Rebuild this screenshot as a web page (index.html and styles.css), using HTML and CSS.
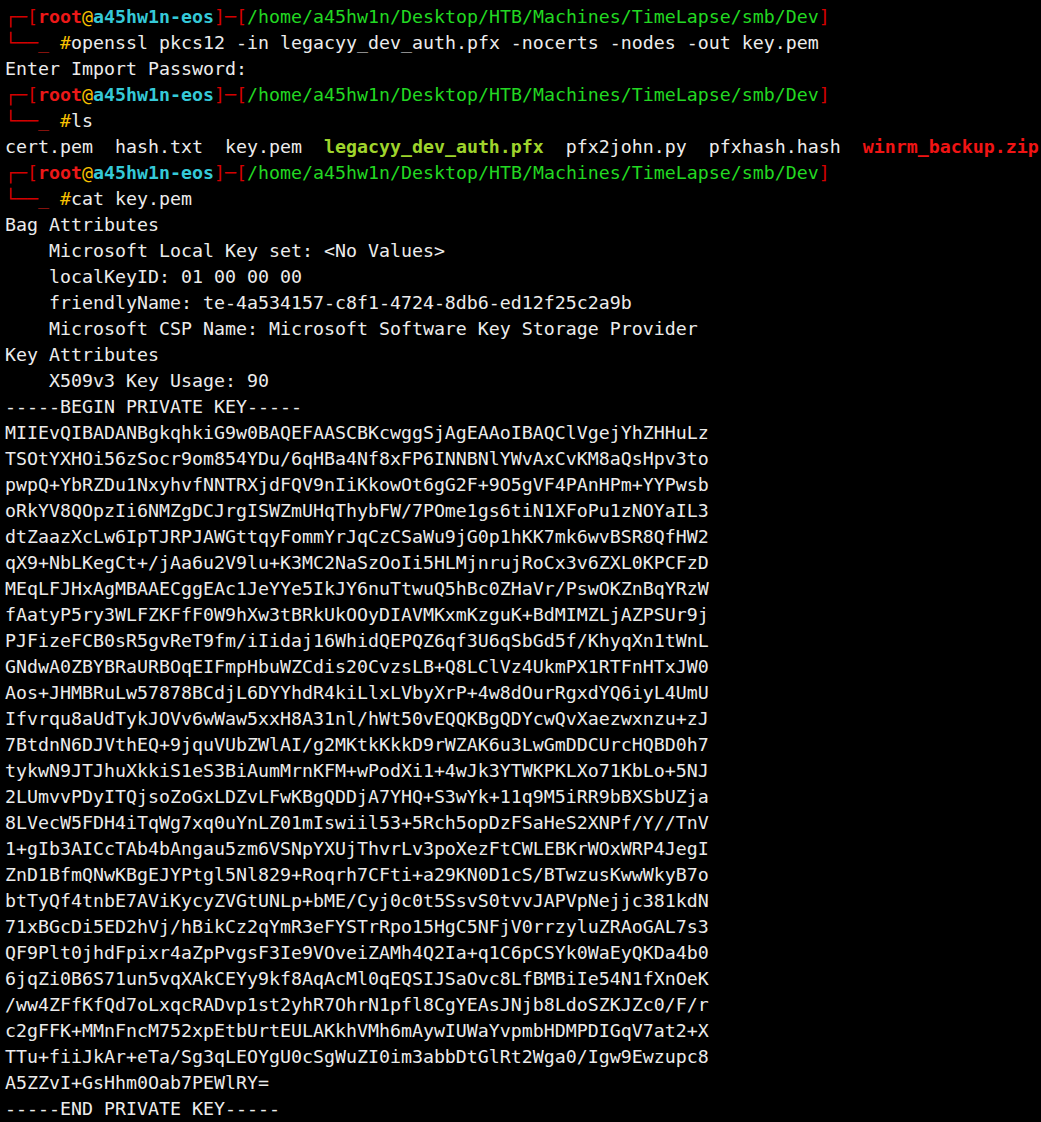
FILE: index.html
```html
<!DOCTYPE html>
<html lang="en">

<head>
    <meta charset="UTF-8" />
    <meta name="viewport" content="width=device-width, initial-scale=1.0" />
    <title>Terminal</title>
    <link rel="stylesheet" href="styles.css">
</head>

<body>
    <div class="term">
        <!-- openssl -->
        <div class="line"><span class="box">┌─[</span><span class="user">root</span><span class="at">@</span><span class="host">a45hw1n-eos</span><span class="box">]─[</span><span class="path">/home/a45hw1n/Desktop/HTB/Machines/TimeLapse/smb/Dev</span><span class="box">]</span></div>
        <div class="line"><span class="box">└──</span><span class="tip">_</span> <span class="hash">#</span>openssl pkcs12 -in legacyy_dev_auth.pfx -nocerts -nodes -out key.pem</div>
        <div class="line">Enter Import Password:</div>
        <!-- ls -->
        <div class="line"><span class="box">┌─[</span><span class="user">root</span><span class="at">@</span><span class="host">a45hw1n-eos</span><span class="box">]─[</span><span class="path">/home/a45hw1n/Desktop/HTB/Machines/TimeLapse/smb/Dev</span><span class="box">]</span></div>
        <div class="line"><span class="box">└──</span><span class="tip">_</span> <span class="hash">#</span>ls</div>
        <div class="line">cert.pem  hash.txt  key.pem  <span class="file-key">legacyy_dev_auth.pfx</span>  pfx2john.py  pfxhash.hash  <span class="file-zip">winrm_backup.zip</span></div>
        <!-- cat -->
        <div class="line"><span class="box">┌─[</span><span class="user">root</span><span class="at">@</span><span class="host">a45hw1n-eos</span><span class="box">]─[</span><span class="path">/home/a45hw1n/Desktop/HTB/Machines/TimeLapse/smb/Dev</span><span class="box">]</span></div>
        <div class="line"><span class="box">└──</span><span class="tip">_</span> <span class="hash">#</span>cat key.pem</div>
        <div class="line">Bag Attributes</div>
        <div class="line">    Microsoft Local Key set: &lt;No Values&gt;</div>
        <div class="line">    localKeyID: 01 00 00 00</div>
        <div class="line">    friendlyName: te-4a534157-c8f1-4724-8db6-ed12f25c2a9b</div>
        <div class="line">    Microsoft CSP Name: Microsoft Software Key Storage Provider</div>
        <div class="line">Key Attributes</div>
        <div class="line">    X509v3 Key Usage: 90</div>
        <div class="line">-----BEGIN PRIVATE KEY-----</div>
        <div class="line">MIIEvQIBADANBgkqhkiG9w0BAQEFAASCBKcwggSjAgEAAoIBAQClVgejYhZHHuLz</div>
        <div class="line">TSOtYXHOi56zSocr9om854YDu/6qHBa4Nf8xFP6INNBNlYWvAxCvKM8aQsHpv3to</div>
        <div class="line">pwpQ+YbRZDu1NxyhvfNNTRXjdFQV9nIiKkowOt6gG2F+9O5gVF4PAnHPm+YYPwsb</div>
        <div class="line">oRkYV8QOpzIi6NMZgDCJrgISWZmUHqThybFW/7POme1gs6tiN1XFoPu1zNOYaIL3</div>
        <div class="line">dtZaazXcLw6IpTJRPJAWGttqyFommYrJqCzCSaWu9jG0p1hKK7mk6wvBSR8QfHW2</div>
        <div class="line">qX9+NbLKegCt+/jAa6u2V9lu+K3MC2NaSzOoIi5HLMjnrujRoCx3v6ZXL0KPCFzD</div>
        <div class="line">MEqLFJHxAgMBAAECggEAc1JeYYe5IkJY6nuTtwuQ5hBc0ZHaVr/PswOKZnBqYRzW</div>
        <div class="line">fAatyP5ry3WLFZKFfF0W9hXw3tBRkUkOOyDIAVMKxmKzguK+BdMIMZLjAZPSUr9j</div>
        <div class="line">PJFizeFCB0sR5gvReT9fm/iIidaj16WhidQEPQZ6qf3U6qSbGd5f/KhyqXn1tWnL</div>
        <div class="line">GNdwA0ZBYBRaURBOqEIFmpHbuWZCdis20CvzsLB+Q8LClVz4UkmPX1RTFnHTxJW0</div>
        <div class="line">Aos+JHMBRuLw57878BCdjL6DYYhdR4kiLlxLVbyXrP+4w8dOurRgxdYQ6iyL4UmU</div>
        <div class="line">Ifvrqu8aUdTykJOVv6wWaw5xxH8A31nl/hWt50vEQQKBgQDYcwQvXaezwxnzu+zJ</div>
        <div class="line">7BtdnN6DJVthEQ+9jquVUbZWlAI/g2MKtkKkkD9rWZAK6u3LwGmDDCUrcHQBD0h7</div>
        <div class="line">tykwN9JTJhuXkkiS1eS3BiAumMrnKFM+wPodXi1+4wJk3YTWKPKLXo71KbLo+5NJ</div>
        <div class="line">2LUmvvPDyITQjsoZoGxLDZvLFwKBgQDDjA7YHQ+S3wYk+11q9M5iRR9bBXSbUZja</div>
        <div class="line">8LVecW5FDH4iTqWg7xq0uYnLZ01mIswiil53+5Rch5opDzFSaHeS2XNPf/Y//TnV</div>
        <div class="line">1+gIb3AICcTAb4bAngau5zm6VSNpYXUjThvrLv3poXezFtCWLEBKrWOxWRP4JegI</div>
        <div class="line">ZnD1BfmQNwKBgEJYPtgl5Nl829+Roqrh7CFti+a29KN0D1cS/BTwzusKwwWkyB7o</div>
        <div class="line">btTyQf4tnbE7AViKycyZVGtUNLp+bME/Cyj0c0t5SsvS0tvvJAPVpNejjc381kdN</div>
        <div class="line">71xBGcDi5ED2hVj/hBikCz2qYmR3eFYSTrRpo15HgC5NFjV0rrzyluZRAoGAL7s3</div>
        <div class="line">QF9Plt0jhdFpixr4aZpPvgsF3Ie9VOveiZAMh4Q2Ia+q1C6pCSYk0WaEyQKDa4b0</div>
        <div class="line">6jqZi0B6S71un5vqXAkCEYy9kf8AqAcMl0qEQSIJSaOvc8LfBMBiIe54N1fXnOeK</div>
        <div class="line">/ww4ZFfKfQd7oLxqcRADvp1st2yhR7OhrN1pfl8CgYEAsJNjb8LdoSZKJZc0/F/r</div>
        <div class="line">c2gFFK+MMnFncM752xpEtbUrtEULAKkhVMh6mAywIUWaYvpmbHDMPDIGqV7at2+X</div>
        <div class="line">TTu+fiiJkAr+eTa/Sg3qLEOYgU0cSgWuZI0im3abbDtGlRt2Wga0/Igw9Ewzupc8</div>
        <div class="line">A5ZZvI+GsHhm0Oab7PEWlRY=</div>
        <div class="line">-----END PRIVATE KEY-----</div>
    </div>
</body>

</html>
```

FILE: styles.css
```css
* {
    margin: 0;
    padding: 0;
}

html,
body {
    background-color: #000;
    height: 100%;
    overflow: hidden;
}

.term {
    padding: 4px 0 0 5px;
    font-family: "DejaVu Sans Mono", "Liberation Mono", monospace;
    font-size: 18.27px;
    color: #ececec;
}

.line {
    height: 26px;
    line-height: 26px;
    white-space: pre;
}

/* 
    提示符
*/
.box {
    color: #d40000;
}

.tip {
    color: #e0201a;
}

.user {
    color: #ec1818;
    font-weight: bold;
}

.at,
.hash {
    color: #f8c200;
}

.host {
    color: #35c9d8;
    font-weight: bold;
}

.path {
    color: #22d822;
}

/* 
    ls 输出
*/
.file-key {
    color: #9fd42c;
    font-weight: bold;
}

.file-zip {
    color: #f01414;
    font-weight: bold;
}
```
